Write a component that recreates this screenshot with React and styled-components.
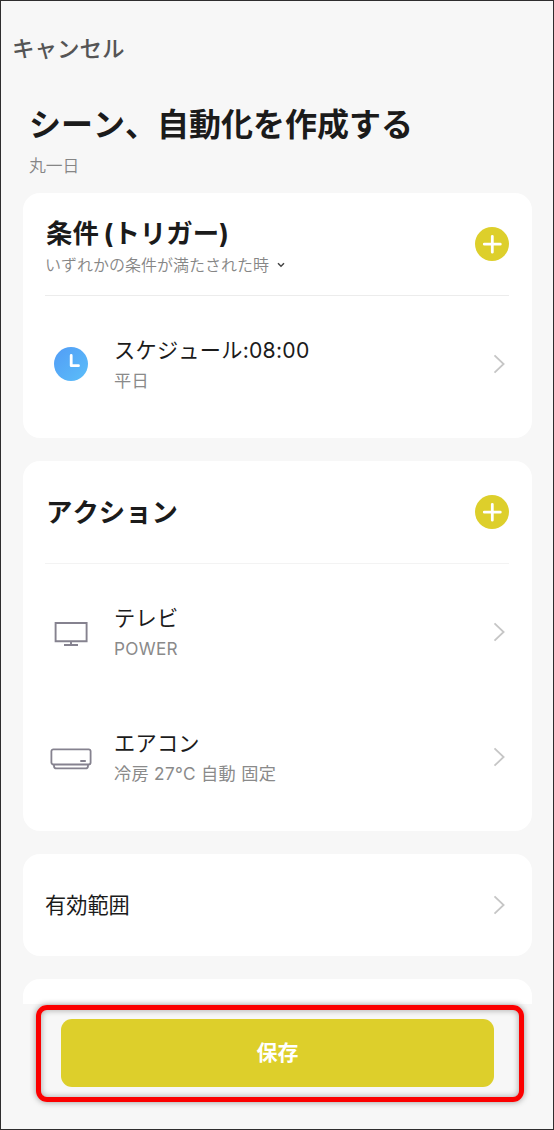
import React from 'react'
import styled, { createGlobalStyle } from 'styled-components'

const GlobalStyle = createGlobalStyle`
  * { box-sizing: border-box; }
  body { margin: 0; background: #f7f7f7; }
  button { font: inherit; border: 0; padding: 0; background: none; cursor: pointer; }
`

const Screen = styled.div`
  display: flex;
  flex-direction: column;
  width: 554px;
  height: 1130px;
  overflow: hidden;
  border: 1px solid #2f2d2e;
  background: #f7f7f7;
  color: #1b1b1b;
  font-family: Inter, 'Noto Sans CJK JP', sans-serif;
  font-kerning: none;
`

const Content = styled.main`
  flex: 1;
  min-height: 0;
  overflow: hidden;
  padding: 0 21px 0 22px;
`

const CancelButton = styled.button`
  display: block;
  height: 32px;
  margin: 32px 0 0 -11px;
  color: #555;
  font-size: 22.5px;
  font-weight: 500;
  line-height: 32px;
`

const PageTitle = styled.h1`
  margin: 36px 0 0 6px;
  font-size: 32px;
  font-weight: 700;
  line-height: 48px;
`

const SceneName = styled.div`
  margin: 5px 0 14px 6px;
  color: #868686;
  font-size: 16.8px;
  line-height: 25px;
  font-weight: 350;
`

const Card = styled.section`
  height: ${({ $height }) => $height}px;
  margin-bottom: 23px;
  padding: 0 23px 0 22px;
  border-radius: 17px;
  background: #fff;
`

const CardHeader = styled.header`
  display: flex;
  align-items: center;
  justify-content: space-between;
  height: 103px;
  border-bottom: 1px solid ${({ $line }) => $line || '#ececec'};
`

const CardTitle = styled.h2`
  margin: 0 0 0 1px;
  font-size: 26.4px;
  font-weight: 700;
  line-height: 36px;
  word-spacing: -1.5px;
`

const Condition = styled.div`
  display: flex;
  align-items: center;
  gap: 8px;
  margin: 1px 0 -4px;
  color: #868686;
  font-size: 16px;
  line-height: 26px;
  font-weight: 350;
`

const AddButton = styled.button`
  width: 34px;
  height: 34px;
  svg { display: block; }
`

const Row = styled.div`
  display: flex;
  align-items: center;
  height: ${({ $height }) => $height || 125}px;
  margin-top: ${({ $top }) => $top || 0}px;
`

const RowIcon = styled.div`
  display: flex;
  justify-content: center;
  width: 52px;
  margin-right: 17px;
  padding-top: ${({ $drop }) => $drop || 0}px;
`

const RowBody = styled.div`
  flex: 1;
  padding-top: ${({ $drop }) => $drop || 0}px;
`

const RowTitle = styled.div`
  font-size: 21.2px;
  letter-spacing: ${({ $spacing }) => $spacing ?? 0.25}px;
  line-height: 30px;
`

const RowDetail = styled.div`
  color: #8a8a8a;
  font-size: 17.2px;
  letter-spacing: 0.3px;
  line-height: 32px;
  font-weight: 400;
`

const Arrow = styled.svg`
  display: block;
  margin-right: 4px;
`

const Footer = styled.footer`
  height: 125px;
  padding: 1px 29px 0 35px;
`

const Highlight = styled.div`
  height: 97px;
  padding: 9px 25px 0 20px;
  border: 5px solid #fb0000;
  border-radius: 11px;
  box-shadow: 0 0 6px rgba(0, 0, 0, 0.4), inset 0 0 6px rgba(0, 0, 0, 0.35);
`

const SaveButton = styled.button`
  display: block;
  width: 433px;
  height: 68px;
  padding: 0 0 4px;
  border-radius: 11px;
  background: #ddcf2b;
  color: #fff;
  font-size: 21px;
  font-weight: 700;
`

const Plus = () => (
  <AddButton aria-label="追加">
    <svg width="34" height="34" viewBox="0 0 34 34">
      <circle cx="17" cy="17" r="17" fill="#ddcf2b" />
      <path d="M17.3 9.3v15.9M9.3 17.2h16" stroke="#fff" strokeWidth="2.8" strokeLinecap="round" />
    </svg>
  </AddButton>
)

const Chevron = () => (
  <Arrow width="12" height="20" viewBox="0 0 12 20" fill="none">
    <path d="M1.5 1.3 10.6 10 1.5 18.7" stroke="#c6c6c6" strokeWidth="1.8" />
  </Arrow>
)

const ClockIcon = () => (
  <svg width="34" height="34" viewBox="0 0 34 34">
    <defs>
      <linearGradient id="clock" x1="0" y1="0" x2="1" y2="1">
        <stop offset="0" stopColor="#529cf6" />
        <stop offset="1" stopColor="#5bbef9" />
      </linearGradient>
    </defs>
    <circle cx="17" cy="17" r="17" fill="url(#clock)" />
    <path d="M17.2 8.5v10.2h7.3" fill="none" stroke="#fff" strokeWidth="2.8" strokeLinecap="round" strokeLinejoin="round" />
  </svg>
)

const TvIcon = () => (
  <svg width="34" height="26" viewBox="0 0 34 26" fill="none" stroke="#85828f" strokeWidth="1.9">
    <path d="M1.6 2h31v18.2h-31zM17 20.5v3.3M10 24h14" />
  </svg>
)

const AirconIcon = () => (
  <svg width="42" height="22" viewBox="0 0 42 22" fill="none" stroke="#85828f" strokeWidth="1.8">
    <rect x="1.4" y="1.3" width="39.2" height="15.2" rx="2" />
    <path d="M4 16.9v1q0 2.5 2.5 2.5h29q2.5 0 2.5-2.5v-1M30.3 13h5.5" />
  </svg>
)

const actions = [
  { title: 'テレビ', detail: 'POWER', icon: <TvIcon />, top: 5, drop: 4 },
  { title: 'エアコン', detail: '冷房 27°C 自動 固定', icon: <AirconIcon />, drop: 4 },
]

const ListItem = ({ title, detail, icon, top, drop }) => (
  <Row $top={top}>
    <RowIcon $drop={drop}>{icon}</RowIcon>
    <RowBody $drop={5}>
      <RowTitle>{title}</RowTitle>
      <RowDetail>{detail}</RowDetail>
    </RowBody>
    <Chevron />
  </Row>
)

const App = () => {
  return (
    <>
      <GlobalStyle />
      <Screen lang="ja">
        <Content>
          <CancelButton>キャンセル</CancelButton>
          <PageTitle>シーン、自動化を作成する</PageTitle>
          <SceneName>丸一日</SceneName>

          <Card $height={245}>
            <CardHeader>
              <div>
                <CardTitle>条件 (トリガー)</CardTitle>
                <Condition>
                  いずれかの条件が満たされた時
                  <svg width="8" height="6" viewBox="0 0 8 6" fill="none">
                    <path d="M1 1.2 4 4.2 7 1.2" stroke="#444" strokeWidth="1.5" />
                  </svg>
                </Condition>
              </div>
              <Plus />
            </CardHeader>
            <ListItem title="スケジュール:08:00" detail="平日" icon={<ClockIcon />} top={5} />
          </Card>

          <Card $height={370}>
            <CardHeader $line="#f3f3f3">
              <CardTitle>アクション</CardTitle>
              <Plus />
            </CardHeader>
            {actions.map(item => <ListItem key={item.title} {...item} />)}
          </Card>

          <Card $height={102}>
            <Row $height={102}>
              <RowBody>
                <RowTitle $spacing={0}>有効範囲</RowTitle>
              </RowBody>
              <Chevron />
            </Row>
          </Card>

          <Card $height={102} />
        </Content>

        <Footer>
          <Highlight>
            <SaveButton>保存</SaveButton>
          </Highlight>
        </Footer>
      </Screen>
    </>
  )
}

export default App
